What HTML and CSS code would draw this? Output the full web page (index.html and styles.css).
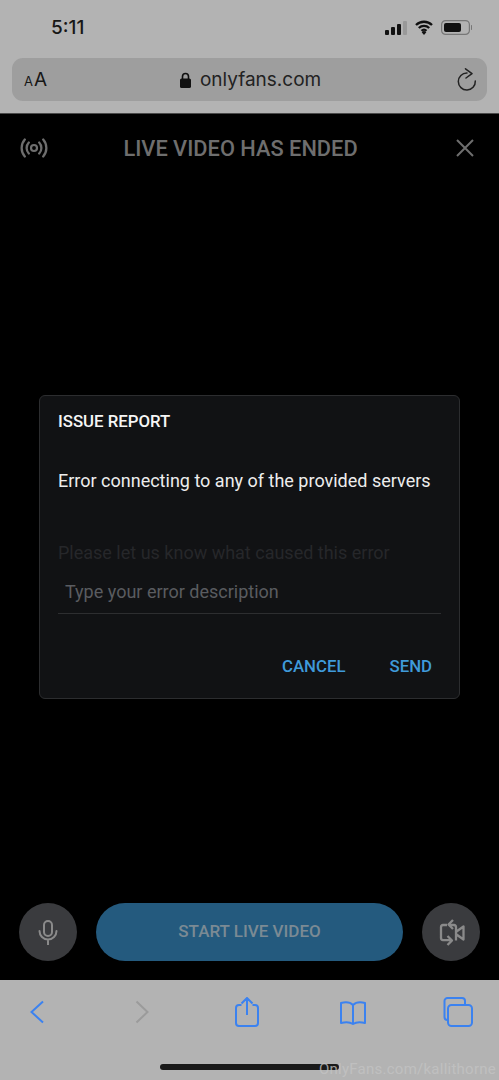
FILE: index.html
```html
<!DOCTYPE html>
<html lang="en">
<head>
<meta charset="utf-8">
<title>Live video</title>
<link rel="stylesheet" href="styles.css">
</head>
<body>
<div class="phone">
  <header class="chrome-top">
    <div class="status">
      <span class="time">5:11</span>
      <div class="status-icons">
        <svg width="22" height="14" viewBox="0 0 22 14"><rect x="0" y="9" width="4" height="5" rx="1" fill="#111"/><rect x="6" y="6" width="4" height="8" rx="1" fill="#111"/><rect x="12" y="3" width="4" height="11" rx="1" fill="#111"/><rect x="18" y="0" width="4" height="14" rx="1" fill="#999"/></svg>
        <svg width="18" height="15" viewBox="0 0 18 15"><path d="M1 5a11.500 11.500 0 0 1 16 0M3.800 8a7.500 7.500 0 0 1 10.400 0M6.500 10.800a3.700 3.700 0 0 1 5 0" fill="none" stroke="#111" stroke-width="2.300"/><path d="M9 15l-2.300-2.800a3.300 3.300 0 0 1 4.600 0z" fill="#111"/></svg>
        <svg width="31" height="15" viewBox="0 0 31 15"><rect x=".6" y=".6" width="27.800" height="13.800" rx="4" fill="none" stroke="#777" stroke-width="1.200"/><rect x="3" y="3" width="17" height="9" rx="2" fill="#111"/><path d="M30 5v5a2.500 2.500 0 0 0 0-5z" fill="#777"/></svg>
      </div>
    </div>
    <div class="urlbar">
      <span class="aa"><span class="aa-s">A</span>A</span>
      <span class="url">
        <svg width="11" height="16" viewBox="0 0 11 16"><path d="M2.500 7V4.500a3 3 0 0 1 6 0V7" fill="none" stroke="#111" stroke-width="1.600"/><rect x="0" y="6.500" width="11" height="9.500" rx="1.600" fill="#111"/></svg>
        onlyfans.com
      </span>
      <svg width="20" height="24" viewBox="0 0 20 24"><path d="M18.300 13A8.500 8.500 0 1 1 10 5" fill="none" stroke="#222" stroke-width="1.500" stroke-linecap="round"/><path d="M8.500 .8L15 5.600 9 10" fill="none" stroke="#222" stroke-width="1.500" stroke-linecap="round" stroke-linejoin="round"/></svg>
    </div>
  </header>

  <main class="stage">
    <div class="stage-head">
      <svg width="28" height="20" viewBox="0 0 28 20"><circle cx="14" cy="10" r="3" fill="none" stroke="#6e6e6e" stroke-width="2.200"/><path d="M8.800 4.500a8 8 0 0 0 0 11M19.200 4.500a8 8 0 0 1 0 11M4.800 1.500a13 13 0 0 0 0 17M23.200 1.500a13 13 0 0 1 0 17" fill="none" stroke="#6e6e6e" stroke-width="2.300" stroke-linecap="round"/></svg>
      <h1 class="stage-title">LIVE VIDEO HAS ENDED</h1>
      <svg width="18" height="18" viewBox="0 0 18 18"><path d="M1 1l16 16M17 1L1 17" stroke="#6e6e6e" stroke-width="2"/></svg>
    </div>

    <section class="dialog">
      <h2 class="dialog-title">ISSUE REPORT</h2>
      <p class="dialog-msg">Error connecting to any of the provided servers</p>
      <div class="field-label">Please let us know what caused this error</div>
      <div class="field">Type your error description</div>
      <div class="actions">
        <span class="action">CANCEL</span>
        <span class="action">SEND</span>
      </div>
    </section>

    <div class="controls">
      <div class="round">
        <svg width="20" height="25" viewBox="0 0 20 25"><rect x="6" y="1" width="8" height="15" rx="4" fill="none" stroke="#8a8a8a" stroke-width="2"/><path d="M1.500 11a8.500 8.500 0 0 0 17 0M10 20v5" fill="none" stroke="#8a8a8a" stroke-width="2" stroke-linecap="round"/></svg>
      </div>
      <div class="start">START LIVE VIDEO</div>
      <div class="round">
        <svg width="27" height="29" viewBox="0 0 27 29"><path d="M9 7H5A2.200 2.200 0 0 0 3 9v11a2.200 2.200 0 0 0 2 2.200h8M9.500 18l4.500 4.500-4.500 4.500M18 22.500V9a2.200 2.200 0 0 0-2-2h-5M15 2l-4.500 4.500L15 11M18.500 13.500l7-5v13l-7-5" fill="none" stroke="#8a8a8a" stroke-width="2.300" stroke-linejoin="round"/></svg>
      </div>
    </div>
  </main>

  <footer class="chrome-bottom">
    <div class="tabbar">
      <svg class="tab" viewBox="0 0 30 32"><path d="M21 4.500L9.500 15 21 25.500" fill="none" stroke="#3b82f0" stroke-width="2"/></svg>
      <svg class="tab" viewBox="0 0 30 32"><path d="M9.500 4.500L20.500 15 9.500 25.500" fill="none" stroke="#9b9b9b" stroke-width="2"/></svg>
      <svg class="tab" viewBox="0 0 30 32"><path d="M9.500 8H7a3 3 0 0 0-3 3v15a3 3 0 0 0 3 3h16a3 3 0 0 0 3-3V11a3 3 0 0 0-3-3h-2.500M15 18V1M9.500 6.500L15 1l5.500 5.500" fill="none" stroke="#3b82f0" stroke-width="2"/></svg>
      <svg class="tab" viewBox="0 0 30 32"><path d="M15 8C12 5 7 5 3 6v20c4-1 9-1 12 1 3-2 8-2 12-1V6c-4-1-9-1-12 2zM15 8v19" fill="none" stroke="#3b82f0" stroke-width="2" stroke-linejoin="round"/></svg>
      <svg class="tab" viewBox="0 0 30 32"><rect x="5" y="8" width="24" height="21" rx="3.500" fill="none" stroke="#3b82f0" stroke-width="2"/><path d="M5 23H4.500A3 3 0 0 1 1.500 20V4a3 3 0 0 1 3-3H19a3 3 0 0 1 3 3v4" fill="none" stroke="#3b82f0" stroke-width="2"/></svg>
    </div>
    <div class="home-bar"></div>
    <div class="watermark">OnlyFans.com/kallithorne</div>
  </footer>
</div>
</body>
</html>
```
FILE: styles.css
```css
* { box-sizing: border-box; }
html, body { margin: 0; padding: 0; }
body { width: 499px; height: 1080px; overflow: hidden; background: #000; font-family: Roboto, "Liberation Sans", sans-serif; }
.phone { width: 499px; height: 1080px; display: flex; flex-direction: column; }

.chrome-top { height: 114px; background: #b3b3b3; border-bottom: 1px solid #4a4a4a; padding: 0 12px; }
.status { height: 58px; display: flex; align-items: center; justify-content: space-between; padding: 0 15px 3px 39px; }
.time { font-family: Inter, "Liberation Sans", sans-serif; font-size: 19px; font-weight: 500; color: #171717; }
.status-icons { display: flex; align-items: center; gap: 8px; }
.urlbar { height: 43px; background: #9e9e9e; border-radius: 11px; display: flex; align-items: center; justify-content: space-between; padding: 0 10px 0 12px; }
.aa { font-family: Inter, "Liberation Sans", sans-serif; font-size: 19px; color: #171717; }
.aa-s { font-size: 13px; margin-right: 1px; }
.url { display: flex; align-items: center; gap: 9px; font-family: Inter, "Liberation Sans", sans-serif; font-size: 19px; color: #222; margin-right: 3px; }

.stage { flex: 1; background: #000; display: flex; flex-direction: column; }
.stage-head { height: 68px; display: flex; align-items: center; justify-content: space-between; padding: 0 25px 0 20px; }
.stage-title { margin: 0 23px 0 0; font-size: 21.800px; font-weight: 500; color: #6e6e6e; }

.dialog { width: 421px; height: 304px; margin: 213px 0 0 39px; background: #111214; border: 1px solid #2c2d2f; border-radius: 6px; padding: 16px 18px 0; }
.dialog-title { margin: 0; font-size: 16.800px; line-height: 19px; font-weight: 500; color: #f6f6f6; }
.dialog-msg { margin: 40px 0 0; font-size: 18px; line-height: 20px; color: #ededed; }
.field-label { margin-top: 52px; font-size: 18px; line-height: 20px; color: #26272a; }
.field { margin-top: 18px; height: 33px; padding-left: 7px; font-size: 18px; line-height: 21px; color: #5a5c60; border-bottom: 1px solid #2d2e30; }
.actions { display: flex; justify-content: flex-end; gap: 44px; margin-top: 43px; padding-right: 9px; }
.action { font-size: 16.800px; line-height: 19px; font-weight: 500; color: #3f9ad9; }

.controls { margin-top: auto; height: 77px; padding: 0 19px; display: flex; gap: 19px; align-items: flex-start; }
.round { width: 58px; height: 58px; flex: none; border-radius: 50%; background: #3a3b3e; display: flex; align-items: center; justify-content: center; }
.start { flex: 1; height: 58px; border-radius: 29px; padding-bottom: 2px; background: #245a7e; color: #7b8a94; font-size: 17px; font-weight: 500; display: flex; align-items: center; justify-content: center; }

.chrome-bottom { height: 100px; background: #b3b3b3; position: relative; }
.tabbar { height: 66px; display: flex; align-items: center; justify-content: space-between; padding: 0 26px 0 21.500px; }
.tab { width: 30px; height: 32px; }
.home-bar { position: absolute; left: 160px; top: 84px; width: 179px; height: 6px; border-radius: 3px; background: #1a1a1a; }
.watermark { position: absolute; right: 3px; top: 80px; font-size: 15px; line-height: 19px; letter-spacing: .25px; color: rgba(195,195,195,.8); }
```
